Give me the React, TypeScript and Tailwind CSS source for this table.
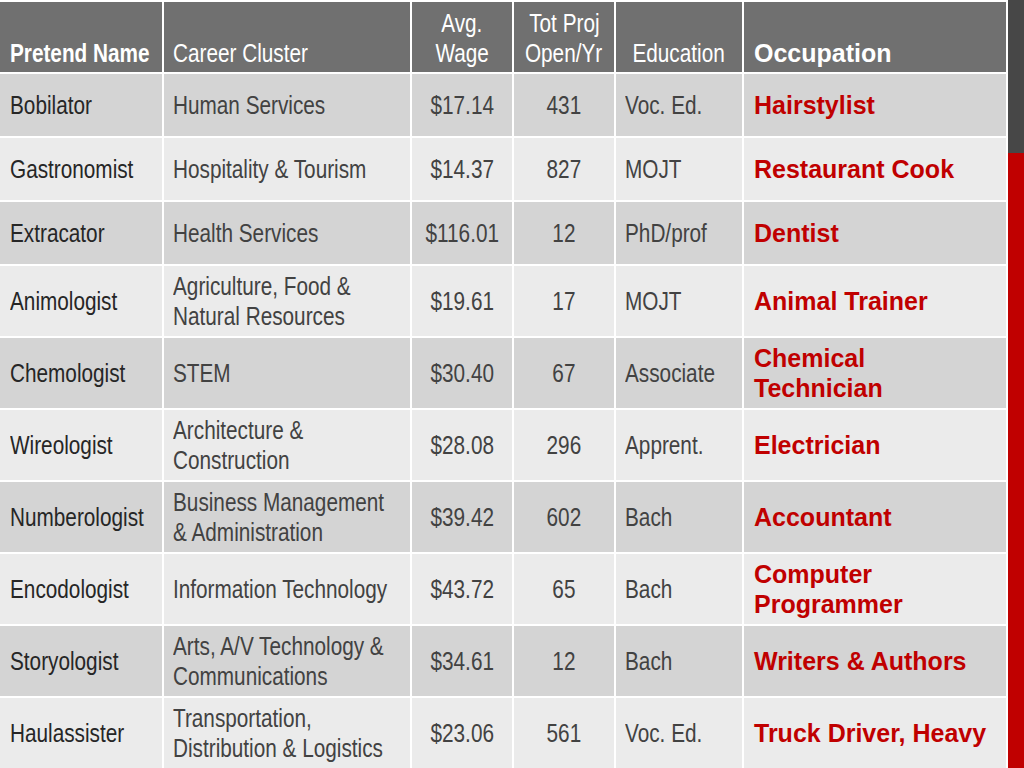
import React from 'react';

type Row = {
  name: string;
  cluster: string[];
  wage: string;
  open: string;
  edu: string;
  job: string[];
  tall: boolean;
};

const rows: Row[] = [
  { name: 'Bobilator', cluster: ['Human Services'], wage: '$17.14', open: '431', edu: 'Voc. Ed.', job: ['Hairstylist'], tall: false },
  { name: 'Gastronomist', cluster: ['Hospitality & Tourism'], wage: '$14.37', open: '827', edu: 'MOJT', job: ['Restaurant Cook'], tall: false },
  { name: 'Extracator', cluster: ['Health Services'], wage: '$116.01', open: '12', edu: 'PhD/prof', job: ['Dentist'], tall: false },
  { name: 'Animologist', cluster: ['Agriculture, Food &', 'Natural Resources'], wage: '$19.61', open: '17', edu: 'MOJT', job: ['Animal Trainer'], tall: true },
  { name: 'Chemologist', cluster: ['STEM'], wage: '$30.40', open: '67', edu: 'Associate', job: ['Chemical', 'Technician'], tall: true },
  { name: 'Wireologist', cluster: ['Architecture &', 'Construction'], wage: '$28.08', open: '296', edu: 'Apprent.', job: ['Electrician'], tall: true },
  { name: 'Numberologist', cluster: ['Business Management', '& Administration'], wage: '$39.42', open: '602', edu: 'Bach', job: ['Accountant'], tall: true },
  { name: 'Encodologist', cluster: ['Information Technology'], wage: '$43.72', open: '65', edu: 'Bach', job: ['Computer', 'Programmer'], tall: true },
  { name: 'Storyologist', cluster: ['Arts, A/V Technology &', 'Communications'], wage: '$34.61', open: '12', edu: 'Bach', job: ['Writers & Authors'], tall: true },
  { name: 'Haulassister', cluster: ['Transportation,', 'Distribution & Logistics'], wage: '$23.06', open: '561', edu: 'Voc. Ed.', job: ['Truck Driver, Heavy'], tall: true },
];

// no narrow font installed, so squeeze Liberation Sans horizontally
const Narrow = ({ children, center }: { children: React.ReactNode; center?: boolean }) => (
  <span className={`block whitespace-nowrap scale-x-[0.83] ${center ? 'origin-center text-center' : 'origin-left'}`}>
    {children}
  </span>
);

export default function App() {
  return (
    <div className="w-[1024px] h-[768px] bg-white flex overflow-hidden font-['Liberation_Sans',Arial,sans-serif]">
      {/* Table */}
      <div className="pt-[2px] w-[1006px] text-[25px] leading-[30px]">
        <div className="grid grid-cols-[162px_246px_100px_100px_126px_262px] gap-[2px] bg-white">
          {/* Header */}
          <div className="h-[70px] bg-[#707070] text-white font-bold flex items-end px-[10px] pb-[4px]">
            <Narrow>Pretend Name</Narrow>
          </div>
          <div className="h-[70px] bg-[#707070] text-white flex items-end px-[9px] pb-[4px]">
            <Narrow>Career Cluster</Narrow>
          </div>
          <div className="h-[70px] bg-[#707070] text-white flex flex-col justify-end items-center pb-[4px]">
            <Narrow center>Avg.</Narrow>
            <Narrow center>Wage</Narrow>
          </div>
          <div className="h-[70px] bg-[#707070] text-white flex flex-col justify-end items-center pb-[4px]">
            <Narrow center>Tot Proj</Narrow>
            <Narrow center>Open/Yr</Narrow>
          </div>
          <div className="h-[70px] bg-[#707070] text-white flex items-end justify-center pb-[4px]">
            <Narrow center>Education</Narrow>
          </div>
          <div className="h-[70px] bg-[#707070] text-white font-bold flex items-end px-[10px] pb-[4px]">Occupation</div>

          {/* Body */}
          {rows.map((r, i) => {
            const bg = i % 2 === 0 ? 'bg-[#d4d4d4]' : 'bg-[#ebebeb]';
            const h = r.tall ? 'h-[70px]' : 'h-[62px]';
            const cell = `${h} ${bg} text-[#424242] flex items-center`;
            return (
              <React.Fragment key={r.name}>
                <div className={`${h} ${bg} text-[#262626] flex items-center px-[10px]`}>
                  <Narrow>{r.name}</Narrow>
                </div>
                <div className={`${cell} px-[9px]`}>
                  <div className="flex flex-col">
                    {r.cluster.map((c) => (
                      <Narrow key={c}>{c}</Narrow>
                    ))}
                  </div>
                </div>
                <div className={`${cell} justify-center`}>
                  <Narrow center>{r.wage}</Narrow>
                </div>
                <div className={`${cell} justify-center`}>
                  <Narrow center>{r.open}</Narrow>
                </div>
                <div className={`${cell} px-[9px]`}>
                  <Narrow>{r.edu}</Narrow>
                </div>
                <div className={`${h} ${bg} flex items-center px-[10px] font-bold text-[#c00000]`}>
                  <div className="flex flex-col">
                    {r.job.map((j) => (
                      <span key={j}>{j}</span>
                    ))}
                  </div>
                </div>
              </React.Fragment>
            );
          })}
        </div>
      </div>

      {/* Side accent bar */}
      <div className="ml-[2px] w-[16px] flex flex-col">
        <div className="h-[153px] bg-[#474747]"></div>
        <div className="flex-1 bg-[#c00000]"></div>
      </div>
    </div>
  );
}
